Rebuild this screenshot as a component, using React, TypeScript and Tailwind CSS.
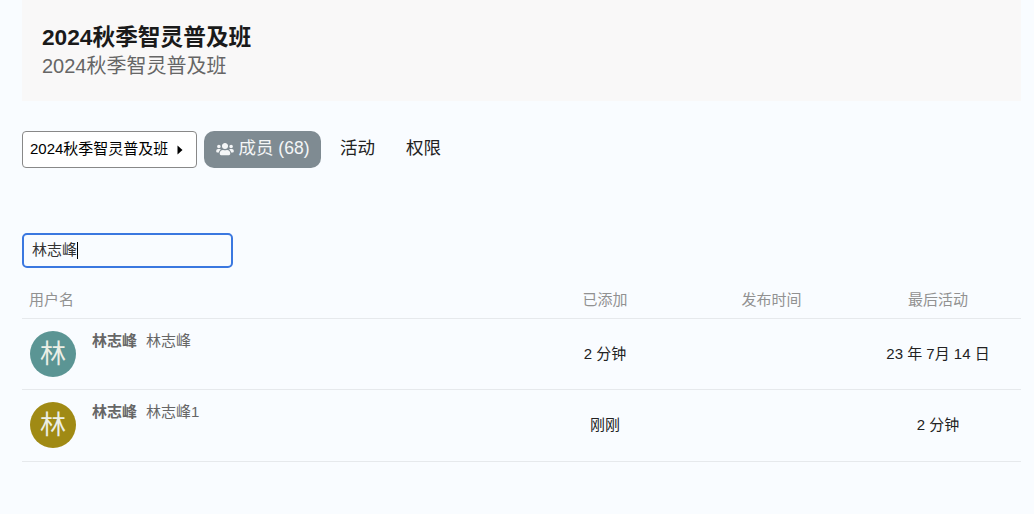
import React from 'react';

const font = '[font-family:"Liberation_Sans","Noto_Sans_CJK_SC",sans-serif]';

const MembersIcon = () => (
  <svg className="-mt-[2px]" width="18" height="14" viewBox="0 0 640 512" fill="currentColor">
    <path d="M96 224c35.300 0 64-28.700 64-64s-28.700-64-64-64-64 28.700-64 64 28.700 64 64 64zm448 0c35.300 0 64-28.700 64-64s-28.700-64-64-64-64 28.700-64 64 28.700 64 64 64zm32 32h-64c-17.600 0-33.500 7.100-45.100 18.600 40.300 22.100 68.900 62 75.100 109.400h66c17.700 0 32-14.300 32-32v-32c0-35.300-28.700-64-64-64zm-256 0c61.900 0 112-50.100 112-112S381.900 32 320 32 208 82.100 208 144s50.100 112 112 112zm76.800 32h-8.300c-20.800 10-43.900 16-68.500 16s-47.600-6-68.500-16h-8.300C179.600 288 128 339.600 128 403.200V432c0 26.500 21.500 48 48 48h288c26.500 0 48-21.500 48-48v-28.800c0-63.600-51.600-115.200-115.200-115.200zm-223.700-13.400C161.500 263.100 145.600 256 128 256H64c-35.300 0-64 28.700-64 64v32c0 17.700 14.300 32 32 32h65.900c6.300-47.400 34.900-87.300 75.200-109.400z" />
  </svg>
);

const members = [
  { name: '林志峰', nick: '林志峰', color: 'bg-[#5b9594]', added: '2 分钟', last: '23 年 7月 14 日', h: 'h-[71px]' },
  { name: '林志峰', nick: '林志峰1', color: 'bg-[#a08a14]', added: '刚刚', last: '2 分钟', h: 'h-[72px]' },
];

const cols = 'grid grid-cols-[500px_166px_167px_166px]';

export default function App() {
  return (
    <div className={`${font} min-h-[514px] bg-[#f9fcff] pl-[22px] pr-[13px] text-[#222]`}>
      <div className="flex h-[101px] flex-col bg-[#f9f8f8] px-5 pt-[23px]">
        <h1 className="text-[22.700px] leading-[28px] font-bold text-[#1a1a1a]">2024秋季智灵普及班</h1>
        <p className="mt-[1px] text-[20px] leading-[28px] text-[#666]">2024秋季智灵普及班</p>
      </div>

      <div className="mt-[30px] flex h-[37px] items-stretch">
        <button className="flex w-[175px] items-center justify-between rounded border border-[#888] bg-white pr-[13px] pl-[7px] text-[15px] text-black">
          <span>2024秋季智灵普及班</span>
          <svg width="6" height="10" viewBox="0 0 6 10" fill="currentColor"><path d="M0.500 0.500 5.500 5 0.500 9.500z" /></svg>
        </button>
        <a className="ml-[7px] flex w-[117px] items-center justify-center gap-[5px] rounded-[10px] bg-[#7f8b92] text-[17.500px] text-[#f4f6f7]">
          <MembersIcon />
          <span className="-mt-[2px]">成员 (68)</span>
        </a>
        <a className="ml-[19px] flex items-center pb-[2px] text-[17.500px]">活动</a>
        <a className="ml-[31px] flex items-center pb-[2px] text-[17.500px]">权限</a>
      </div>

      <div className="mt-[65px] flex h-[35px] w-[211px] items-center rounded-[5px] border-2 border-[#3b78e0] pl-2 text-[15px] text-[#333]">
        <span>林志峰</span>
        <span className="h-[17px] w-px bg-black" />
      </div>

      <div className={`${cols} mt-[15px] h-[36px] items-center border-b border-[#e6e9ec] text-[15px] text-[#919191]`}>
        <div className="pl-[7px]">用户名</div>
        <div className="text-center">已添加</div>
        <div className="text-center">发布时间</div>
        <div className="text-center">最后活动</div>
      </div>

      {members.map((m, i) => (
        <div key={i} className={`${cols} ${m.h} items-center border-b border-[#e6e9ec] text-[15px] text-[#222]`}>
          <div className="flex h-full items-start pt-3 pl-2">
            <div className={`flex h-[46px] w-[46px] items-center justify-center rounded-full text-[26px] text-[#ecefe6] ${m.color}`}>林</div>
            <div className="ml-4 flex pt-[1px] text-[15px] leading-[18px] text-[#666]">
              <span className="font-bold">{m.name}</span>
              <span className="ml-[9px]">{m.nick}</span>
            </div>
          </div>
          <div className="text-center">{m.added}</div>
          <div />
          <div className="text-center">{m.last}</div>
        </div>
      ))}
    </div>
  );
}
